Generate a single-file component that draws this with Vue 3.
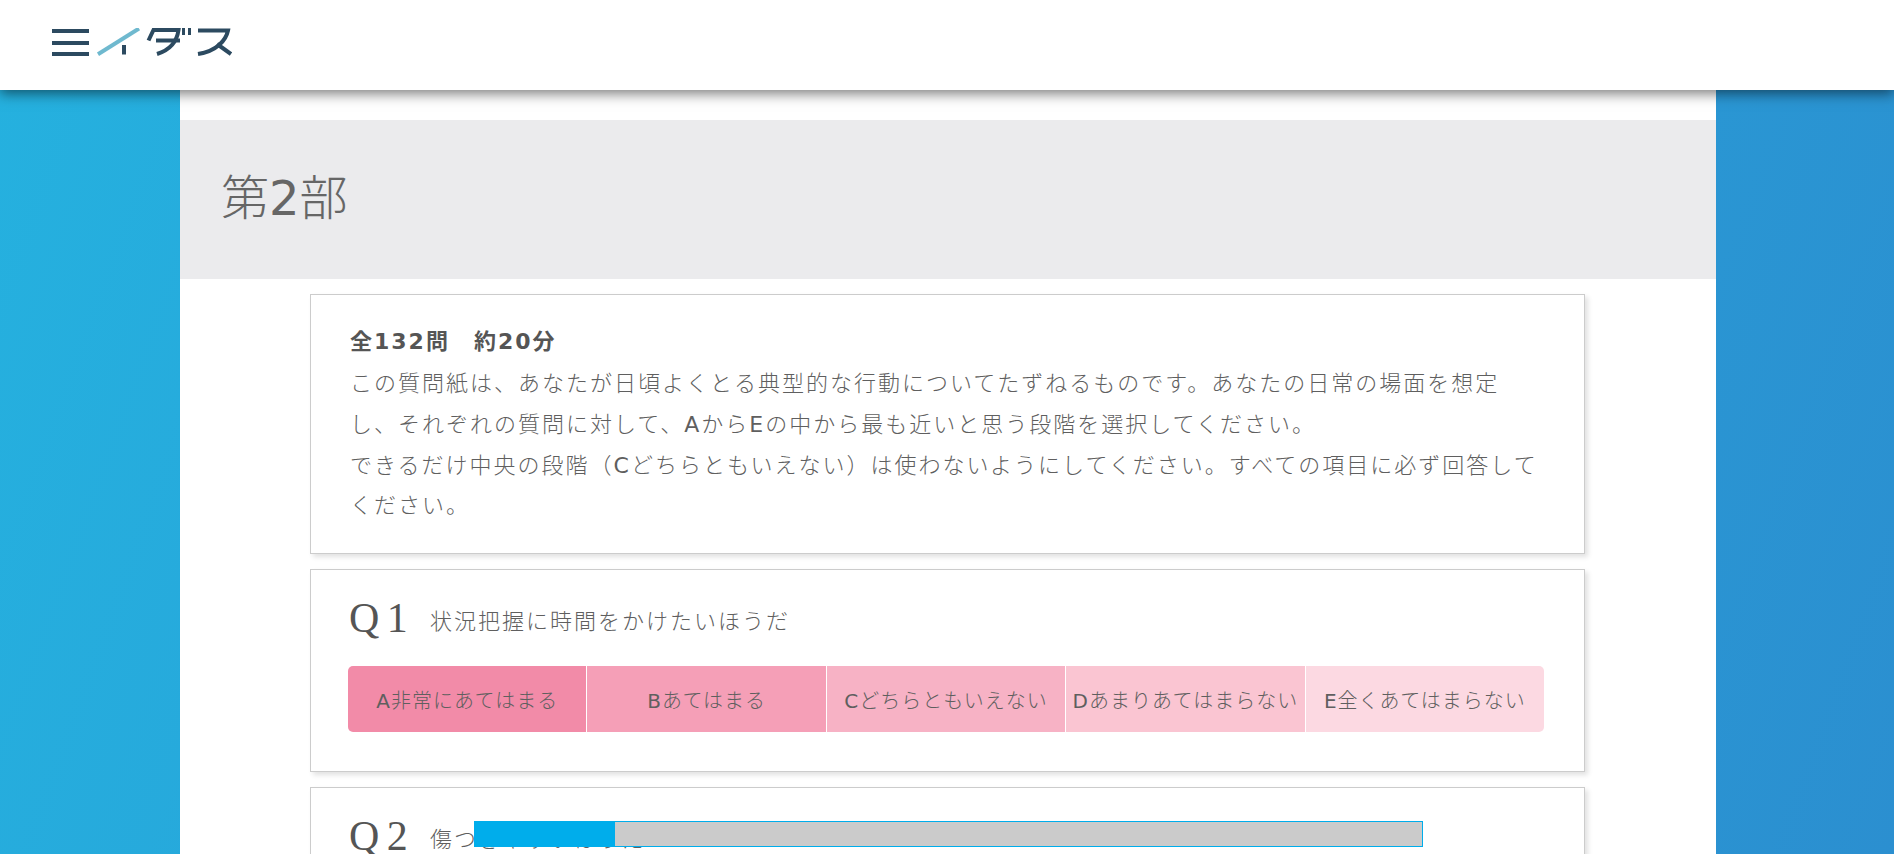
<script setup>
const parts = (text) => text.split(/([A-Z0-9]+)/).filter(Boolean).map((value, i) => ({ value, i, latin: /^[A-Z0-9]+$/.test(value) }))
const intro = [
  parts('この質問紙は、あなたが日頃よくとる典型的な行動についてたずねるものです。あなたの日常の場面を想定し、それぞれの質問に対して、AからEの中から最も近いと思う段階を選択してください。'),
  parts('できるだけ中央の段階（Cどちらともいえない）は使わないようにしてください。すべての項目に必ず回答してください。')
]
const title = parts('第2部')
const choices = [
  { parts: parts('A非常にあてはまる'), color: '#f28ba8' },
  { parts: parts('Bあてはまる'), color: '#f59fb7' },
  { parts: parts('Cどちらともいえない'), color: '#f7b2c5' },
  { parts: parts('Dあまりあてはまらない'), color: '#fac5d2' },
  { parts: parts('E全くあてはまらない'), color: '#fcd9e2' }
]
const questions = [
  { no: 'Q', num: '1', text: '状況把握に時間をかけたいほうだ' },
  { no: 'Q', num: '2', text: '傷つきやすいほうだ' }
]
</script>

<template>
  <div class="page">
    <header class="top">
      <svg class="logo" viewBox="0 0 180 28" width="180" height="28" role="img" aria-label="ミイダス">
        <g fill="none" stroke="#2c4a60" stroke-width="4">
          <path d="M0 3H37M0 15H37M0 26H37" />
          <path d="M72 17v9.500" />
          <path d="M96.500 12.500L101.500 2H126.500C125 13 118 22 105 26" />
          <path d="M104 12.500H128" />
          <path d="M131.500 0v7M137.500 0v7" stroke-width="3" />
          <path d="M146 2.500H176C174 12 165 23 146 26" />
          <path d="M165 16L179 26" />
        </g>
        <path d="M46 26.300L87 .500" fill="none" stroke="#6fb9cf" stroke-width="4" />
      </svg>
    </header>
    <main class="sheet">
      <div class="band"><h1><span v-for="p in title" :key="p.i" :class="{ latin: p.latin }">{{ p.value }}</span></h1></div>
      <section class="card intro">
        <strong>全132問　約20分</strong>
        <p v-for="(line, n) in intro" :key="n"><span v-for="p in line" :key="p.i" :class="{ latin: p.latin }">{{ p.value }}</span></p>
      </section>
      <section v-for="q in questions" :key="q.num" class="card question">
        <div class="qhead">
          <span class="qno">{{ q.no }} {{ q.num }}</span>
          <span class="qtext">{{ q.text }}</span>
        </div>
        <div class="choices">
          <button v-for="(c, n) in choices" :key="n" class="choice" :style="{ background: c.color }"><span v-for="p in c.parts" :key="p.i" :class="{ latin: p.latin }">{{ p.value }}</span></button>
        </div>
      </section>
    </main>
    <div class="progress"><div class="fill"></div></div>
  </div>
</template>

<style>
html, body { margin: 0; height: 100%; overflow: hidden; }
</style>

<style scoped>
.page {
  position: relative;
  height: 854px;
  overflow: hidden;
  background: linear-gradient(110deg, #25b1df 0%, #2b8fd0 100%);
  font-family: "Noto Sans CJK JP", sans-serif;
  font-weight: 300;
  color: #5f5f5f;
}
.latin { font-family: "DejaVu Sans", sans-serif; font-weight: 400; line-height: 0; }
.top {
  position: relative;
  z-index: 2;
  height: 90px;
  background: #fff;
  box-shadow: 0 4px 12px rgba(0, 0, 0, .5);
  display: flex;
  align-items: flex-start;
  padding: 28px 0 0 52px;
  box-sizing: border-box;
}
.logo { display: block; }
.sheet {
  width: 1536px;
  margin: 0 0 0 180px;
  height: 764px;
  background: #fff;
  padding-top: 30px;
  box-sizing: border-box;
}
.band {
  height: 159px;
  background: #ebebed;
  display: flex;
  align-items: center;
  padding-left: 41px;
  margin-bottom: 15px;
  box-sizing: border-box;
  padding-bottom: 12px;
}
h1 {
  margin: 0;
  font-size: 48px;
  font-weight: 300;
  color: #666;
}
.card {
  width: 1275px;
  box-sizing: border-box;
  margin: 0 0 15px 130px;
  border: 1px solid #ccc;
  box-shadow: 3px 3px 5px rgba(0, 0, 0, .12);
  background: #fff;
}
.intro {
  height: 260px;
  padding: 27px 38px 0 39px;
  font-size: 22px;
  line-height: 40.8px;
  letter-spacing: 2px;
}
.intro strong {
  font-family: "DejaVu Sans", "Noto Sans CJK JP", sans-serif;
  font-weight: 700;
  color: #555;
  display: block;
  height: 39px;
}
.intro p { margin: 0; }
.question { height: 203px; padding: 23px 37px 0; }
.qhead { display: flex; align-items: center; height: 50px; }
.qno {
  font-family: "Liberation Serif", serif;
  font-size: 42px;
  font-weight: 400;
  letter-spacing: 1px;
  word-spacing: -5px;
  color: #555;
  width: 81px;
  padding-left: 1px;
  white-space: nowrap;
}
.qtext { font-size: 22px; letter-spacing: 2px; padding-top: 2px; }
.choices {
  display: flex;
  margin-top: 23px;
  width: 1196px;
  height: 66px;
  border-radius: 5px;
  overflow: hidden;
}
.choice {
  flex: 1 1 0;
  border: 0;
  border-right: 1px solid #fff;
  padding: 0;
  font: inherit;
  font-size: 20px;
  letter-spacing: 1px;
  color: #5f5f5f;
  white-space: nowrap;
}
.choice:last-child { border-right: 0; }
.progress {
  position: absolute;
  left: 474px;
  top: 821px;
  width: 949px;
  height: 26px;
  box-sizing: border-box;
  border: 1px solid #00adeb;
  background: #cbcbcb;
  z-index: 3;
}
.fill { width: 140px; height: 100%; background: #00adeb; }
</style>
